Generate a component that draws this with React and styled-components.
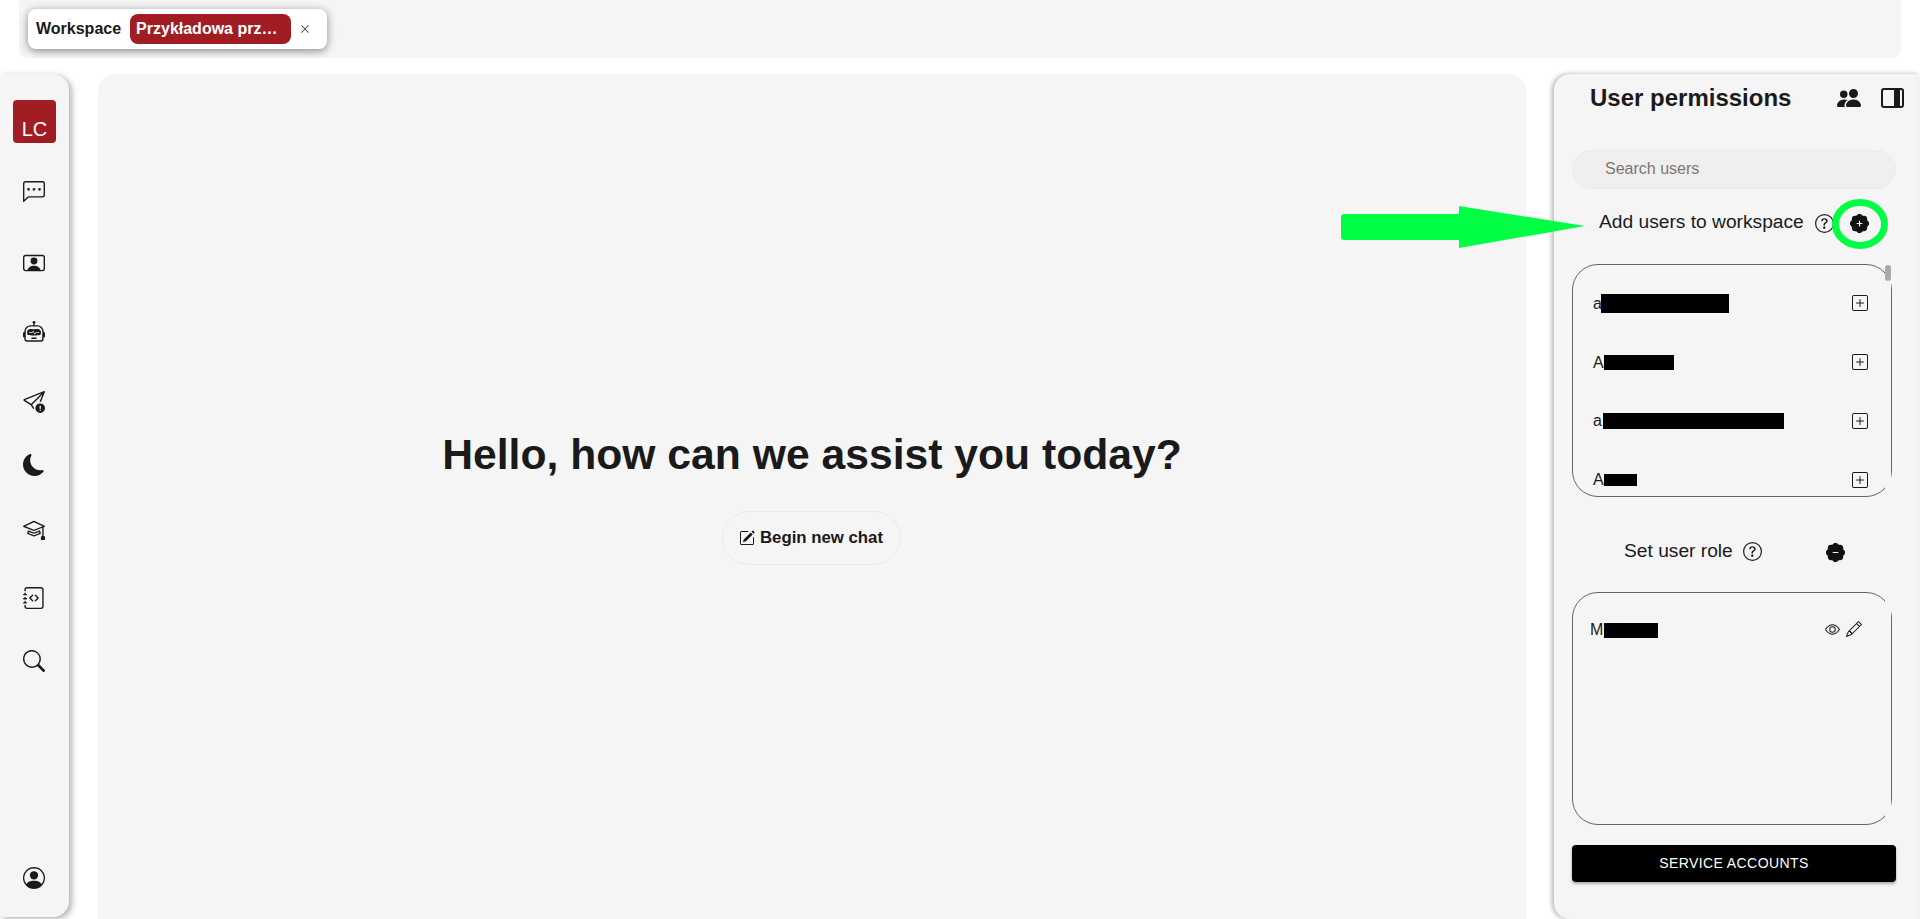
import React from 'react'
import styled, { createGlobalStyle } from 'styled-components'
import {
  BsChatLeftDots,
  BsEye,
  BsJournalCode,
  BsMoonFill,
  BsMortarboard,
  BsPatchMinusFill,
  BsPatchPlusFill,
  BsPencil,
  BsPencilSquare,
  BsPeopleFill,
  BsPersonCircle,
  BsPersonVideo,
  BsPlusSquare,
  BsQuestionCircle,
  BsRobot,
  BsSearch,
  BsSendExclamation,
  BsXLg,
} from 'react-icons/bs'

const GlobalStyle = createGlobalStyle`
  html, body {
    margin: 0;
    padding: 0;
    background: #fff;
    overflow: hidden;
  }
  body {
    font-family: "Liberation Sans", Arial, sans-serif;
    color: #1a1a1a;
  }
`

const Page = styled.div`
  width: 1920px;
  height: 919px;
  display: flex;
  flex-direction: column;
  overflow: hidden;
  position: relative;
`

const TopBar = styled.div`
  height: 58px;
  margin: 0 19px 0 19px;
  padding: 9px;
  box-sizing: border-box;
  background: #f5f5f5;
  border-radius: 0 0 8px 8px;
  display: flex;
  align-items: flex-start;
`

const TabChip = styled.div`
  width: 299px;
  height: 40px;
  box-sizing: border-box;
  padding: 0 8px;
  background: #fff;
  border-radius: 8px;
  box-shadow: 0 2px 8px rgba(0, 0, 0, 0.45);
  display: flex;
  align-items: center;
  font-size: 16px;
  font-weight: 700;
`

const TabName = styled.span`
  width: 161px;
  height: 30px;
  margin-left: 9px;
  padding-left: 6px;
  box-sizing: border-box;
  background: #a11d23;
  border-radius: 8px;
  color: #fff;
  line-height: 30px;
  white-space: nowrap;
`

const TabClose = styled.span`
  margin-left: 9px;
  display: flex;
  font-size: 10px;
  color: #111;
`

const Body = styled.div`
  flex: 1;
  min-height: 0;
  margin-top: 16px;
  display: flex;
  align-items: stretch;
`

const Sidebar = styled.nav`
  width: 69px;
  flex: none;
  height: 843px;
  padding: 26px 1px 0 0;
  box-sizing: border-box;
  background: #f5f5f5;
  border-radius: 0 16px 16px 0;
  box-shadow: 3px 2px 6px rgba(0, 0, 0, 0.3);
  display: flex;
  flex-direction: column;
  align-items: center;
`

const Avatar = styled.div`
  width: 43px;
  height: 43px;
  margin-bottom: 38px;
  margin-left: 1px;
  padding-top: 12px;
  box-sizing: border-box;
  background: #a11d23;
  border-radius: 4px;
  color: #fff;
  font-size: 20px;
  line-height: 34px;
  text-align: center;
`

const NavIcon = styled.a`
  height: 22px;
  margin-top: ${(p) => p.$top || 0}px;
  display: flex;
  align-items: center;
  justify-content: center;
  font-size: 22px;
  color: #1a1a1a;
`

const Spacer = styled.div`
  flex: 1;
`

const SidebarFoot = styled.div`
  height: 28px;
  flex: none;
`

const Main = styled.main`
  width: 1428px;
  flex: none;
  margin-left: 29px;
  background: #f5f5f5;
  border-radius: 16px 16px 0 0;
  display: flex;
  flex-direction: column;
  align-items: center;
  justify-content: center;
  box-sizing: border-box;
`

const Greeting = styled.h1`
  margin: 2px 0 34px;
  font-size: 42.67px;
  line-height: 46px;
  font-weight: 700;
  color: #1a1a1a;
`

const NewChatButton = styled.button`
  width: 179px;
  height: 54px;
  margin-right: 2px;
  padding: 0;
  background: transparent;
  border: 1px solid #e9e9e9;
  border-radius: 27px;
  display: flex;
  align-items: center;
  justify-content: center;
  gap: 5px;
  font-family: inherit;
  font-size: 16.8px;
  font-weight: 700;
  color: #1a1a1a;
`

const PermissionsPanel = styled.aside`
  width: 366px;
  flex: none;
  height: 845px;
  margin-left: 28px;
  padding: 0 0 0 18px;
  box-sizing: border-box;
  background: #f5f5f5;
  border-right: 5px solid #f2f2f2;
  border-radius: 16px 0 0 16px;
  box-shadow: -2px 0 5px rgba(0, 0, 0, 0.3);
  display: flex;
  flex-direction: column;
`

const PanelHeader = styled.header`
  height: 48px;
  display: flex;
  align-items: center;
  padding-left: 19px;
`

const PanelTitle = styled.h2`
  margin: 0 0 0 -1px;
  width: 247px;
  font-size: 24px;
  font-weight: 700;
  color: #1a1a1a;
`

const HeaderIcon = styled.span`
  display: flex;
  font-size: 24px;
  color: #1a1a1a;
`

const PanelToggle = styled.span`
  margin-left: 20px;
  width: 23px;
  height: 20px;
  box-sizing: border-box;
  border: 2px solid #1a1a1a;
  border-radius: 3px;
  display: flex;
  justify-content: flex-end;
  padding: 0 2px;
  &::after {
    content: '';
    width: 6px;
    background: #1a1a1a;
  }
`

const SearchInput = styled.input`
  width: 324px;
  height: 39px;
  margin-top: 28px;
  padding: 0 0 2px 32px;
  box-sizing: border-box;
  background: #f0efed;
  border: 1px solid #ebebe9;
  border-radius: 20px;
  font-family: inherit;
  font-size: 16px;
  &::placeholder {
    color: #777;
    opacity: 1;
  }
`

const SectionRow = styled.div`
  height: 24px;
  margin-top: ${(p) => p.$top}px;
  padding-left: ${(p) => p.$indent}px;
  display: flex;
  align-items: center;
  font-size: 19.2px;
  color: #1a1a1a;
`

const Hint = styled.span`
  margin-left: ${(p) => p.$left}px;
  margin-top: ${(p) => p.$down || 0}px;
  display: flex;
  font-size: 19px;
`

const PatchButton = styled.span`
  margin-left: ${(p) => p.$left}px;
  margin-top: 3px;
  display: flex;
  font-size: 19px;
  color: #111;
`

const ListBox = styled.div`
  position: relative;
  width: 320px;
  height: 233px;
  margin-top: ${(p) => p.$top}px;
  box-sizing: border-box;
  border: 1px solid #666;
  border-radius: 26px;
`

const ListBody = styled.div`
  height: 100%;
  padding-top: ${(p) => p.$pad}px;
  box-sizing: border-box;
  border-radius: 25px;
  overflow: hidden;
`

const ScrollTrack = styled.div`
  position: absolute;
  top: 0;
  right: 0;
  bottom: 0;
  width: 6px;
  background: #f5f5f5;
`

const ScrollThumb = styled.div`
  width: 6px;
  height: 16px;
  border-radius: 3px;
  background: #aaa;
`

const UserRow = styled.div`
  height: ${(p) => p.$height}px;
  padding: 0 ${(p) => p.$right}px 0 ${(p) => p.$left}px;
  display: flex;
  align-items: center;
  font-size: 16px;
  color: #1a1a1a;
`

const Initial = styled.span`
  width: ${(p) => p.$width}px;
  margin-top: 1px;
  flex: none;
`

const Redaction = styled.span`
  display: block;
  width: ${(p) => p.$width}px;
  height: ${(p) => p.$height}px;
  margin-top: ${(p) => p.$down || 0}px;
  background: #000;
`

const RowAction = styled.span`
  margin-left: ${(p) => p.$left || 0}px;
  display: flex;
  font-size: ${(p) => p.$size || 16}px;
  color: #1a1a1a;
`

const PushRight = styled.div`
  flex: 1;
`

const ServiceButton = styled.button`
  width: 324px;
  height: 37px;
  margin-top: 20px;
  padding: 0 0 2px;
  background: #000;
  border: 0;
  border-radius: 4px;
  box-shadow: 0 2px 3px rgba(0, 0, 0, 0.3);
  color: #fff;
  font-family: inherit;
  font-size: 14px;
  letter-spacing: 0.4px;
  text-transform: uppercase;
`

// green marker somebody drew over the screenshot
const Annotation = styled.svg`
  position: absolute;
  left: 0;
  top: 0;
  pointer-events: none;
`

const users = [
  { initial: 'a', initialWidth: 8, redaction: 128, height: 19 },
  { initial: 'A', initialWidth: 11, redaction: 70, height: 15 },
  { initial: 'a', initialWidth: 10, redaction: 181, height: 16 },
  { initial: 'A', initialWidth: 11, redaction: 33, height: 12 },
]

const navIcons = [
  { icon: <BsChatLeftDots />, top: 0 },
  { icon: <BsPersonVideo />, top: 49 },
  { icon: <BsRobot />, top: 47 },
  { icon: <BsSendExclamation />, top: 48 },
  { icon: <BsMoonFill />, top: 41 },
  { icon: <BsMortarboard />, top: 42 },
  { icon: <BsJournalCode />, top: 47 },
  { icon: <BsSearch />, top: 41 },
]

export default function App() {
  return (
    <Page>
      <GlobalStyle />
      <TopBar>
        <TabChip>
          Workspace
          <TabName>Przykładowa prz…</TabName>
          <TabClose>
            <BsXLg />
          </TabClose>
        </TabChip>
      </TopBar>
      <Body>
        <Sidebar>
          <Avatar>LC</Avatar>
          {navIcons.map((item, i) => (
            <NavIcon key={i} $top={item.top}>
              {item.icon}
            </NavIcon>
          ))}
          <Spacer />
          <NavIcon>
            <BsPersonCircle />
          </NavIcon>
          <SidebarFoot />
        </Sidebar>
        <Main>
          <Greeting>Hello, how can we assist you today?</Greeting>
          <NewChatButton>
            <BsPencilSquare size={16} />
            Begin new chat
          </NewChatButton>
        </Main>
        <PermissionsPanel>
          <PanelHeader>
            <PanelTitle>User permissions</PanelTitle>
            <HeaderIcon>
              <BsPeopleFill />
            </HeaderIcon>
            <PanelToggle />
          </PanelHeader>
          <SearchInput placeholder="Search users" />
          <SectionRow $top={21} $indent={27}>
            Add users to workspace
            <Hint $left={11} $down={2}>
              <BsQuestionCircle />
            </Hint>
            <PatchButton $left={16}>
              <BsPatchPlusFill />
            </PatchButton>
          </SectionRow>
          <ListBox $top={30}>
            <ListBody $pad={9}>
              {users.map((user, i) => (
                <UserRow key={i} $left={20} $right={23} $height={58.8}>
                  <Initial $width={user.initialWidth}>{user.initial}</Initial>
                  <Redaction $width={user.redaction} $height={user.height} />
                  <PushRight />
                  <RowAction>
                    <BsPlusSquare />
                  </RowAction>
                </UserRow>
              ))}
            </ListBody>
            <ScrollTrack>
              <ScrollThumb />
            </ScrollTrack>
          </ListBox>
          <SectionRow $top={42} $indent={52}>
            Set user role
            <Hint $left={10}>
              <BsQuestionCircle />
            </Hint>
            <PatchButton $left={64}>
              <BsPatchMinusFill />
            </PatchButton>
          </SectionRow>
          <ListBox $top={29}>
            <ListBody $pad={11}>
              <UserRow $left={17} $right={29} $height={50}>
                <Initial $width={14}>M</Initial>
                <Redaction $width={54} $height={15} $down={2} />
                <PushRight />
                <RowAction $size={15}>
                  <BsEye />
                </RowAction>
                <RowAction $size={16} $left={6}>
                  <BsPencil />
                </RowAction>
              </UserRow>
            </ListBody>
            <ScrollTrack />
          </ListBox>
          <ServiceButton>Service accounts</ServiceButton>
        </PermissionsPanel>
      </Body>
      <Annotation width="1920" height="919" viewBox="0 0 1920 919">
        <path
          d="M1344 214H1459V206L1585 226L1459 248V240H1344Q1341 240 1341 237V217Q1341 214 1344 214Z"
          fill="#00ff44"
        />
        <ellipse cx="1860" cy="224" rx="24.5" ry="21.5" fill="none" stroke="#00ff44" strokeWidth="7" />
      </Annotation>
    </Page>
  )
}
